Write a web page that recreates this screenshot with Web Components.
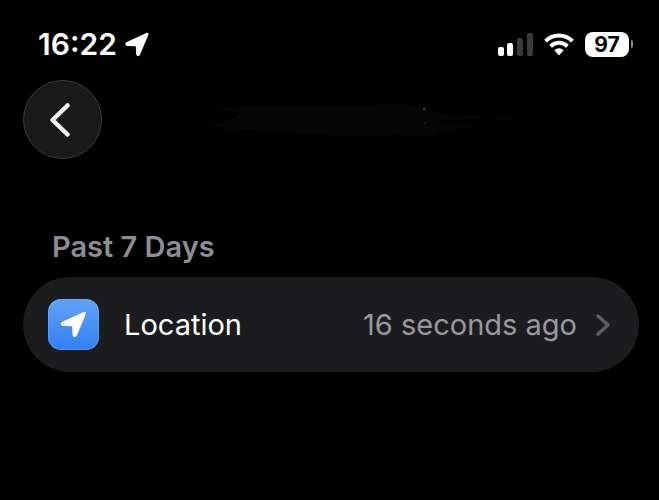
<!DOCTYPE html>
<html lang="en">
<head>
<meta charset="UTF-8">
<meta name="viewport" content="width=device-width, initial-scale=1.0">
<title>Past 7 Days</title>
<style>
  body {
    margin: 0;
    background: #000;
    color: #fff;
    font-family: Inter, "Liberation Sans", sans-serif;
    font-size: 29px;
    line-height: 36px;
  }
</style>
</head>
<body>
<activity-screen>
  <status-bar slot="status" time="16:22" battery="97"></status-bar>
  <nav-header slot="header"></nav-header>
  <list-section heading="Past 7 Days">
    <list-row value="16 seconds ago">
      <app-icon slot="icon"></app-icon>
      Location
    </list-row>
  </list-section>
</activity-screen>

<script>
const ARROW = '<path d="M2.2 10.8 21.8 1.8Q23 1.4 22.3 2.9L14.2 22.2Q13 24.2 12.1 22.2L11.8 14Q11.800 13.200 11 13.200L2.400 13Q.4 12 2.200 10.800Z" fill="currentColor" stroke="currentColor" stroke-width="2" stroke-linejoin="round"/>';

class ActivityScreen extends HTMLElement {
  connectedCallback() {
    this.attachShadow({ mode: 'open' });
    this.shadowRoot.innerHTML = `
      <style>
        :host {
          display: block;
          padding: 26px 20px 26px 23px;
        }
        main {
          margin-top: 70px;
        }
      </style>
      <slot name="status"></slot>
      <slot name="header"></slot>
      <main><slot></slot></main>
    `;
  }
}
customElements.define('activity-screen', ActivityScreen);

class StatusBar extends HTMLElement {
  connectedCallback() {
    this.attachShadow({ mode: 'open' });
    this.shadowRoot.innerHTML = `
      <style>
        :host {
          display: flex;
          align-items: center;
          justify-content: space-between;
          height: 36px;
          padding: 0 6px 0 15px;
        }
        .group {
          display: flex;
          align-items: center;
        }
        .left {
          gap: 8px;
          font-size: 30px;
          font-weight: 600;
        }
        .right {
          gap: 11px;
        }
        svg {
          display: block;
        }
        .battery {
          display: flex;
          align-items: center;
          gap: 2px;
        }
        .level {
          width: 44px;
          border-radius: 8px;
          background: #fff;
          color: #000;
          font-size: 21px;
          font-weight: 700;
          line-height: 25px;
          text-align: center;
        }
        .cap {
          width: 2px;
          height: 8px;
          border-radius: 0 2px 2px 0;
          background: #8a8a8a;
        }
      </style>
      <div class="group left">
        <time>${this.getAttribute('time')}</time>
        <svg width="24" height="25" viewBox="0 0 24 25" aria-hidden="true">${ARROW}</svg>
      </div>
      <div class="group right">
        <svg width="35" height="23" viewBox="0 0 35 23" aria-hidden="true">
          <g fill="#fff">
            <rect x="0" y="14" width="6" height="9" rx="2"/>
            <rect x="9" y="10" width="6" height="13" rx="2"/>
          </g>
          <g fill="#3a3a3a">
            <rect x="19" y="5" width="6" height="18" rx="2"/>
            <rect x="29" y="0" width="6" height="23" rx="2"/>
          </g>
        </svg>
        <svg width="30" height="23" viewBox="0 0 30 23" aria-hidden="true">
          <g fill="none" stroke="#fff" stroke-width="4">
            <path d="M1.6 8.1Q7.2 2.5 15 2.5T28.4 8.1"/>
            <path d="M6.6 13.2Q10.3 9.7 15 9.7T23.4 13.2"/>
          </g>
          <path d="M10.3 17.2Q15 13.4 19.7 17.2L15.7 21.8Q15 22.5 14.3 21.8Z" fill="#fff"/>
        </svg>
        <div class="battery">
          <span class="level">${this.getAttribute('battery')}</span>
          <span class="cap"></span>
        </div>
      </div>
    `;
  }
}
customElements.define('status-bar', StatusBar);

class NavHeader extends HTMLElement {
  connectedCallback() {
    this.attachShadow({ mode: 'open' });
    this.shadowRoot.innerHTML = `
      <style>
        :host {
          display: grid;
          grid-template-columns: 79px 1fr 20px;
          align-items: center;
          margin-top: 18px;
        }
        button {
          display: grid;
          place-items: center;
          box-sizing: border-box;
          width: 79px;
          height: 79px;
          padding: 0 5px 0 0;
          border: 1px solid #3b3b3c;
          border-radius: 50%;
          background: #191919;
          color: #f5f5f5;
        }
        .smudge {
          justify-self: center;
          width: 100%;
          max-width: 306px;
          padding-top: 5px;
        }
      </style>
      <button type="button" aria-label="Back">
        <svg width="20" height="36" viewBox="0 0 20 36" fill="none" stroke="currentColor" stroke-width="4.500" stroke-linecap="round" stroke-linejoin="round" aria-hidden="true">
          <path d="M17.500 3.500 2.500 18 17.500 32.500"/>
        </svg>
      </button>
      <svg class="smudge" viewBox="0 0 306 36" aria-hidden="true">
        <path d="M10 5 30 2 200 1 216 2 222 8 252 11 304 13 302 15 240 16 228 18 263 22 262 24 232 26 230 30 224 32 176 31 166 32 90 30 62 28 20 26 16 23 0 22 2 20 14 19 26 13 32 8 10 7Z" fill="#050505"/>
        <path d="M215 5l2-1-1 2M217 19v1" fill="none" stroke="#555"/>
      </svg>
    `;
  }
}
customElements.define('nav-header', NavHeader);

class ListSection extends HTMLElement {
  connectedCallback() {
    this.attachShadow({ mode: 'open' });
    this.shadowRoot.innerHTML = `
      <style>
        :host {
          display: block;
        }
        h2 {
          margin: 0 0 12px;
          padding-left: 29px;
          color: #8d8d92;
          font-size: 29px;
          font-weight: 600;
          line-height: 36px;
        }
        .card {
          overflow: hidden;
          border-radius: 48px;
          background: #1c1c1e;
        }
      </style>
      <section>
        <h2>${this.getAttribute('heading')}</h2>
        <div class="card"><slot></slot></div>
      </section>
    `;
  }
}
customElements.define('list-section', ListSection);

class ListRow extends HTMLElement {
  connectedCallback() {
    this.attachShadow({ mode: 'open' });
    this.shadowRoot.innerHTML = `
      <style>
        :host {
          display: block;
        }
        a {
          display: flex;
          align-items: center;
          padding: 22px 29px 22px 25px;
          color: #fff;
          text-decoration: none;
        }
        .label {
          flex: 1;
          margin-left: 25px;
        }
        .value {
          margin-right: 19px;
          color: #98989e;
        }
        svg {
          display: block;
          color: #5f5f63;
        }
      </style>
      <a href="#location">
        <slot name="icon"></slot>
        <span class="label"><slot></slot></span>
        <span class="value">${this.getAttribute('value')}</span>
        <svg width="14" height="22" viewBox="0 0 14 22" fill="none" stroke="currentColor" stroke-width="3.500" stroke-linecap="round" stroke-linejoin="round" aria-hidden="true">
          <path d="M2 2 12 11 2 20"/>
        </svg>
      </a>
    `;
  }
}
customElements.define('list-row', ListRow);

class AppIcon extends HTMLElement {
  connectedCallback() {
    this.attachShadow({ mode: 'open' });
    this.shadowRoot.innerHTML = `
      <style>
        :host {
          display: grid;
          place-items: center;
          box-sizing: border-box;
          width: 51px;
          height: 51px;
          border-radius: 13px;
          background: linear-gradient(#60a3f4, #327ff5);
          box-shadow: inset 0 0 1px 1px rgba(150, 200, 255, 0.3);
          color: #fff;
        }
      </style>
      <svg width="27" height="27" viewBox="0 0 24 25" aria-hidden="true">${ARROW}</svg>
    `;
  }
}
customElements.define('app-icon', AppIcon);
</script>
</body>
</html>
